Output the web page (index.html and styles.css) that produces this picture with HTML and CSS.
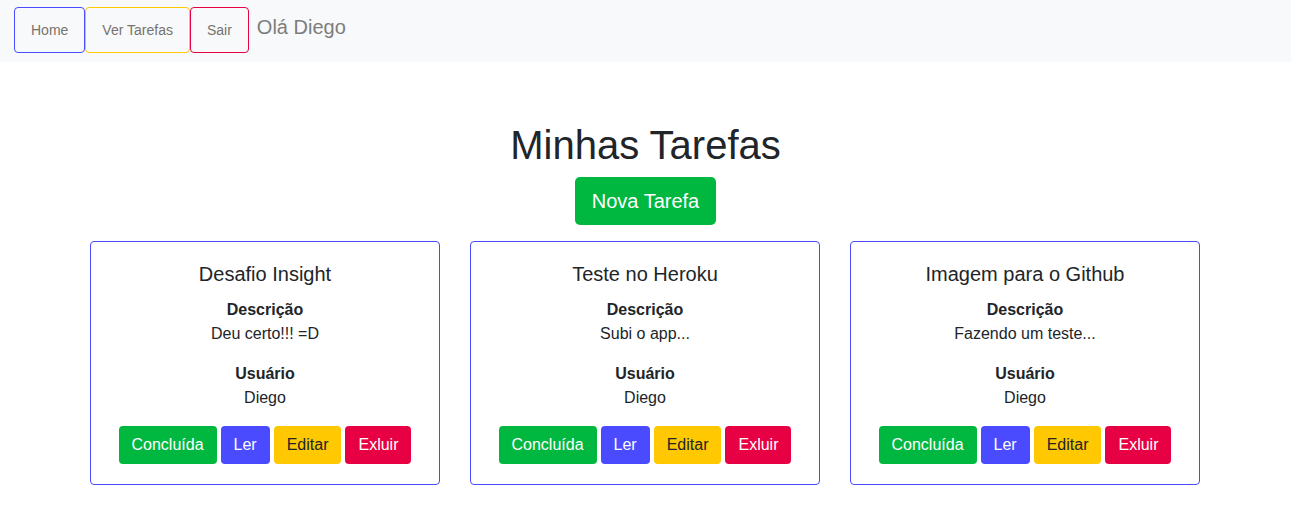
FILE: index.html
```html
<!DOCTYPE html>
<html lang="pt-BR">
<head>
<meta charset="utf-8">
<title>Minhas Tarefas</title>
<link rel="stylesheet" href="styles.css">
</head>
<body>
<nav class="navbar">
  <a class="nav-btn nav-blue" href="#">Home</a>
  <a class="nav-btn nav-yellow" href="#">Ver Tarefas</a>
  <a class="nav-btn nav-red" href="#">Sair</a>
  <span class="greeting">Olá Diego</span>
</nav>
<main class="main">
  <h1 class="title">Minhas Tarefas</h1>
  <a class="btn btn-green btn-lg" href="#">Nova Tarefa</a>
  <div class="cards">
    <div class="card">
      <h5 class="card-title">Desafio Insight</h5>
      <p class="label">Descrição</p>
      <p class="value">Deu certo!!! =D</p>
      <p class="label">Usuário</p>
      <p class="value">Diego</p>
      <div class="actions">
        <a class="btn btn-green" href="#">Concluída</a>
        <a class="btn btn-blue" href="#">Ler</a>
        <a class="btn btn-yellow" href="#">Editar</a>
        <a class="btn btn-red" href="#">Exluir</a>
      </div>
    </div>
    <div class="card">
      <h5 class="card-title">Teste no Heroku</h5>
      <p class="label">Descrição</p>
      <p class="value">Subi o app...</p>
      <p class="label">Usuário</p>
      <p class="value">Diego</p>
      <div class="actions">
        <a class="btn btn-green" href="#">Concluída</a>
        <a class="btn btn-blue" href="#">Ler</a>
        <a class="btn btn-yellow" href="#">Editar</a>
        <a class="btn btn-red" href="#">Exluir</a>
      </div>
    </div>
    <div class="card">
      <h5 class="card-title">Imagem para o Github</h5>
      <p class="label">Descrição</p>
      <p class="value">Fazendo um teste...</p>
      <p class="label">Usuário</p>
      <p class="value">Diego</p>
      <div class="actions">
        <a class="btn btn-green" href="#">Concluída</a>
        <a class="btn btn-blue" href="#">Ler</a>
        <a class="btn btn-yellow" href="#">Editar</a>
        <a class="btn btn-red" href="#">Exluir</a>
      </div>
    </div>
  </div>
</main>
</body>
</html>
```
FILE: styles.css
```css
* { box-sizing: border-box; }
body {
  margin: 0;
  font-family: "Liberation Sans", Arial, sans-serif;
  font-size: 16px;
  line-height: 24px;
  color: #212529;
  background: #fff;
}
a { text-decoration: none; }
.navbar {
  background: #f8f9fa;
  height: 62px;
  display: flex;
  align-items: flex-start;
  padding: 7px 14px 0;
}
.nav-btn {
  display: block;
  padding: 14px 16px;
  font-size: 14px;
  line-height: 16px;
  color: #77736f;
  border: 1px solid;
  border-radius: 4px;
}
.nav-blue { border-color: #4a4aff; }
.nav-yellow { border-color: #ffc800; }
.nav-red { border-color: #e80044; }
.greeting {
  margin-left: 8px;
  margin-top: 8px;
  font-size: 20px;
  line-height: 24px;
  color: #7d7d7d;
}
.main {
  display: flex;
  flex-direction: column;
  align-items: center;
  padding-top: 59px;
}
.title {
  margin: 0 0 8px;
  font-size: 40px;
  font-weight: 400;
  line-height: 48px;
}
.btn {
  display: inline-block;
  padding: 6px 12px;
  border: 1px solid transparent;
  border-radius: 4px;
  font-size: 16px;
  line-height: 24px;
  color: #fff;
}
.btn-lg {
  padding: 8px 16px;
  font-size: 20px;
  line-height: 30px;
  border-radius: 5px;
}
.btn-green { background: #00b83f; }
.btn-blue { background: #4a4aff; }
.btn-yellow { background: #ffc800; color: #212529; }
.btn-red { background: #e80044; }
.cards {
  margin-top: 16px;
  margin-right: 1px;
  display: flex;
  gap: 30px;
}
.card {
  width: 350px;
  border: 1px solid #4a4aff;
  border-radius: 4px;
  padding: 20px 20px 20px;
  text-align: center;
}
.card-title {
  margin: 0 0 12px;
  font-size: 20px;
  font-weight: 400;
  line-height: 24px;
}
.label {
  margin: 0;
  font-weight: 700;
}
.value {
  margin: 0 0 16px;
}
.actions {
  display: flex;
  justify-content: center;
  gap: 4px;
  margin-top: 1px;
}
```
